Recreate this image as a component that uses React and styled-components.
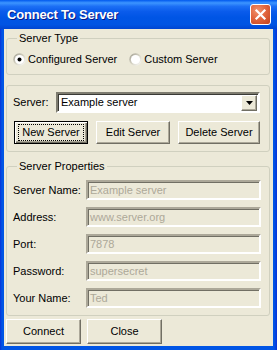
import React from 'react';
import styled, { createGlobalStyle } from 'styled-components';

const Global = createGlobalStyle`
  html, body { margin: 0; padding: 0; background: #ffffff; }
  body { font-family: "Liberation Sans", Arial, sans-serif; font-size: 11px; color: #000; }
  * { box-sizing: border-box; }
`;

const Window = styled.div`
  width: 277px;
  height: 350px;
  display: flex;
  flex-direction: column;
  background: linear-gradient(90deg, #0831D9 0px, #0055E5 2px, #0055E5 274px, #0831D9 277px);
`;

const TitleBar = styled.div`
  height: 29px;
  flex: none;
  display: flex;
  align-items: center;
  justify-content: space-between;
  padding: 0 6px 0 7px;
  background: linear-gradient(180deg, #0058EE 0%, #3D95FF 10%, #1C6FF5 22%, #0A5BEB 40%, #0055E5 60%, #0054E3 85%, #0045D1 100%);
`;

const Title = styled.span`
  font-family: "Liberation Sans", Arial, sans-serif;
  font-weight: bold;
  font-size: 13px;
  letter-spacing: -0.2px;
  color: #ffffff;
  text-shadow: 1px 1px 0 #0A1883;
`;

const CloseButton = styled.div`
  width: 21px;
  height: 21px;
  border: 1px solid #ffffff;
  border-radius: 3px;
  background: radial-gradient(circle at 35% 30%, #F0926E 0%, #E2673F 45%, #C3401C 100%);
  display: flex;
  align-items: center;
  justify-content: center;
`;

const Body = styled.div`
  flex: 1;
  margin: 0 4px 4px 4px;
  background: #ECE9D8;
  padding: 3px 3px 0 2px;
  display: flex;
  flex-direction: column;
`;

const Group = styled.fieldset`
  margin: ${p => p.$top}px 0 0 0;
  padding: ${p => p.$padTop}px 6px ${p => p.$padBottom}px 6px;
  border: 1px solid #D0D0BF;
  border-radius: 3px;
  min-width: 0;
`;

const Legend = styled.legend`
  padding: 0 2px;
  margin-left: 4px;
  line-height: 13px;
  font-size: 11px;
  color: #000;
`;

const RadioRow = styled.div`
  display: flex;
  align-items: center;
  height: 14px;
`;

const RadioItem = styled.label`
  display: flex;
  align-items: center;
  gap: 2px;
  margin-right: 12px;
  line-height: 13px;
`;

const Panel = styled.div`
  margin-top: 10px;
  border: 1px solid #D0D0BF;
  border-radius: 3px;
  padding: 6px 9px 7px 6px;
  display: flex;
  flex-direction: column;
  gap: 8px;
`;

const ComboRow = styled.div`
  display: flex;
  align-items: center;
`;

const RowLabel = styled.span`
  width: ${p => p.$w}px;
  flex: none;
  line-height: 13px;
`;

const Combo = styled.div`
  flex: 1;
  height: 21px;
  display: flex;
  align-items: center;
  background: #ffffff;
  border-style: solid;
  border-width: 2px;
  border-color: #7E7C70 #FFFFFF #FFFFFF #7E7C70;
  box-shadow: inset 1px 1px 0 #3A3A35;
  padding: 0 1px 0 3px;
`;

const ComboText = styled.span`
  flex: 1;
  line-height: 13px;
`;

const ComboArrow = styled.div`
  width: 16px;
  height: 16px;
  background: #ECE9D8;
  border-style: solid;
  border-width: 1px;
  border-color: #FFFFFF #716F64 #716F64 #FFFFFF;
  box-shadow: inset -1px -1px 0 #ACA899;
  display: flex;
  align-items: center;
  justify-content: center;
`;

const ButtonRow = styled.div`
  display: flex;
  gap: ${p => p.$gap}px;
  padding-left: ${p => p.$left}px;
`;

const Button = styled.div`
  width: ${p => p.$w}px;
  height: ${p => p.$h}px;
  display: flex;
  align-items: center;
  justify-content: center;
  background: #ECE9D8;
  border-style: solid;
  border-width: 1px;
  border-color: ${p => p.$default ? '#000000' : '#FFFFFF #716F64 #716F64 #FFFFFF'};
  box-shadow: ${p => p.$default
    ? 'inset 1px 1px 0 #FFFFFF, inset -1px -1px 0 #716F64, inset -2px -2px 0 #ACA899'
    : 'inset -1px -1px 0 #ACA899'};
  line-height: 13px;
`;

const FocusRing = styled.span`
  padding: 1px 3px;
  outline: 1px dotted #000;
  outline-offset: 0;
`;

const FieldList = styled.div`
  display: flex;
  flex-direction: column;
  gap: 7px;
`;

const FieldRow = styled.div`
  display: flex;
  align-items: center;
  height: 20px;
`;

const TextBox = styled.div`
  flex: 1;
  height: 20px;
  margin-right: 2px;
  background: #ECE9D8;
  border-style: solid;
  border-width: 2px;
  border-color: #ACA899 #FFFFFF #FFFFFF #ACA899;
  box-shadow: inset 1px 1px 0 #716F64;
  color: #ACA899;
  display: flex;
  align-items: center;
  padding-left: 2px;
  line-height: 13px;
`;

const BottomButtons = styled(ButtonRow)`
  margin-top: 3px;
`;

const Radio = ({ checked, id }) => (
  <svg width="13" height="13" viewBox="0 0 13 13">
    <defs>
      <linearGradient id={id} x1="0" y1="0" x2="1" y2="1">
        <stop offset="0" stopColor="#9C9A8E" />
        <stop offset="0.5" stopColor="#D6D3C4" />
        <stop offset="1" stopColor="#FFFFFF" />
      </linearGradient>
    </defs>
    <circle cx="6.5" cy="6.5" r="6.2" fill={`url(#${id})`} />
    <circle cx="6.5" cy="6.5" r="4.6" fill="#FFFFFF" />
    {checked && <circle cx="6.5" cy="6.5" r="2" fill="#000000" />}
  </svg>
);

const fields = [
  ['Server Name:', 'Example server'],
  ['Address:', 'www.server.org'],
  ['Port:', '7878'],
  ['Password:', 'supersecret'],
  ['Your Name:', 'Ted'],
];

export default function App() {
  return (
    <>
      <Global />
      <Window>
        <TitleBar>
          <Title>Connect To Server</Title>
          <CloseButton>
            <svg width="13" height="13" viewBox="0 0 13 13">
              <path d="M2.5 2.5 L10.5 10.5 M10.5 2.5 L2.5 10.5" stroke="#FFFFFF" strokeWidth="2.2" strokeLinecap="square" />
            </svg>
          </CloseButton>
        </TitleBar>
        <Body>
          <Group $top={0} $padTop={7} $padBottom={8}>
            <Legend>Server Type</Legend>
            <RadioRow>
              <RadioItem><Radio checked id="r1" />Configured Server</RadioItem>
              <RadioItem><Radio id="r2" />Custom Server</RadioItem>
            </RadioRow>
          </Group>
          <Panel>
            <ComboRow>
              <RowLabel $w={43}>Server:</RowLabel>
              <Combo>
                <ComboText>Example server</ComboText>
                <ComboArrow>
                  <svg width="7" height="4" viewBox="0 0 7 4">
                    <path d="M0 0 H7 L3.5 4 Z" fill="#000000" />
                  </svg>
                </ComboArrow>
              </Combo>
            </ComboRow>
            <ButtonRow $gap={8} $left={1}>
              <Button $w={75} $h={23} $default><FocusRing>New Server</FocusRing></Button>
              <Button $w={75} $h={23}>Edit Server</Button>
              <Button $w={83} $h={23}>Delete Server</Button>
            </ButtonRow>
          </Panel>
          <Group $top={8} $padTop={7} $padBottom={7}>
            <Legend>Server Properties</Legend>
            <FieldList>
              {fields.map(([label, value]) => (
                <FieldRow key={label}>
                  <RowLabel $w={73}>{label}</RowLabel>
                  <TextBox>{value}</TextBox>
                </FieldRow>
              ))}
            </FieldList>
          </Group>
          <BottomButtons $gap={6} $left={0}>
            <Button $w={75} $h={25}>Connect</Button>
            <Button $w={75} $h={25}>Close</Button>
          </BottomButtons>
        </Body>
      </Window>
    </>
  );
}
